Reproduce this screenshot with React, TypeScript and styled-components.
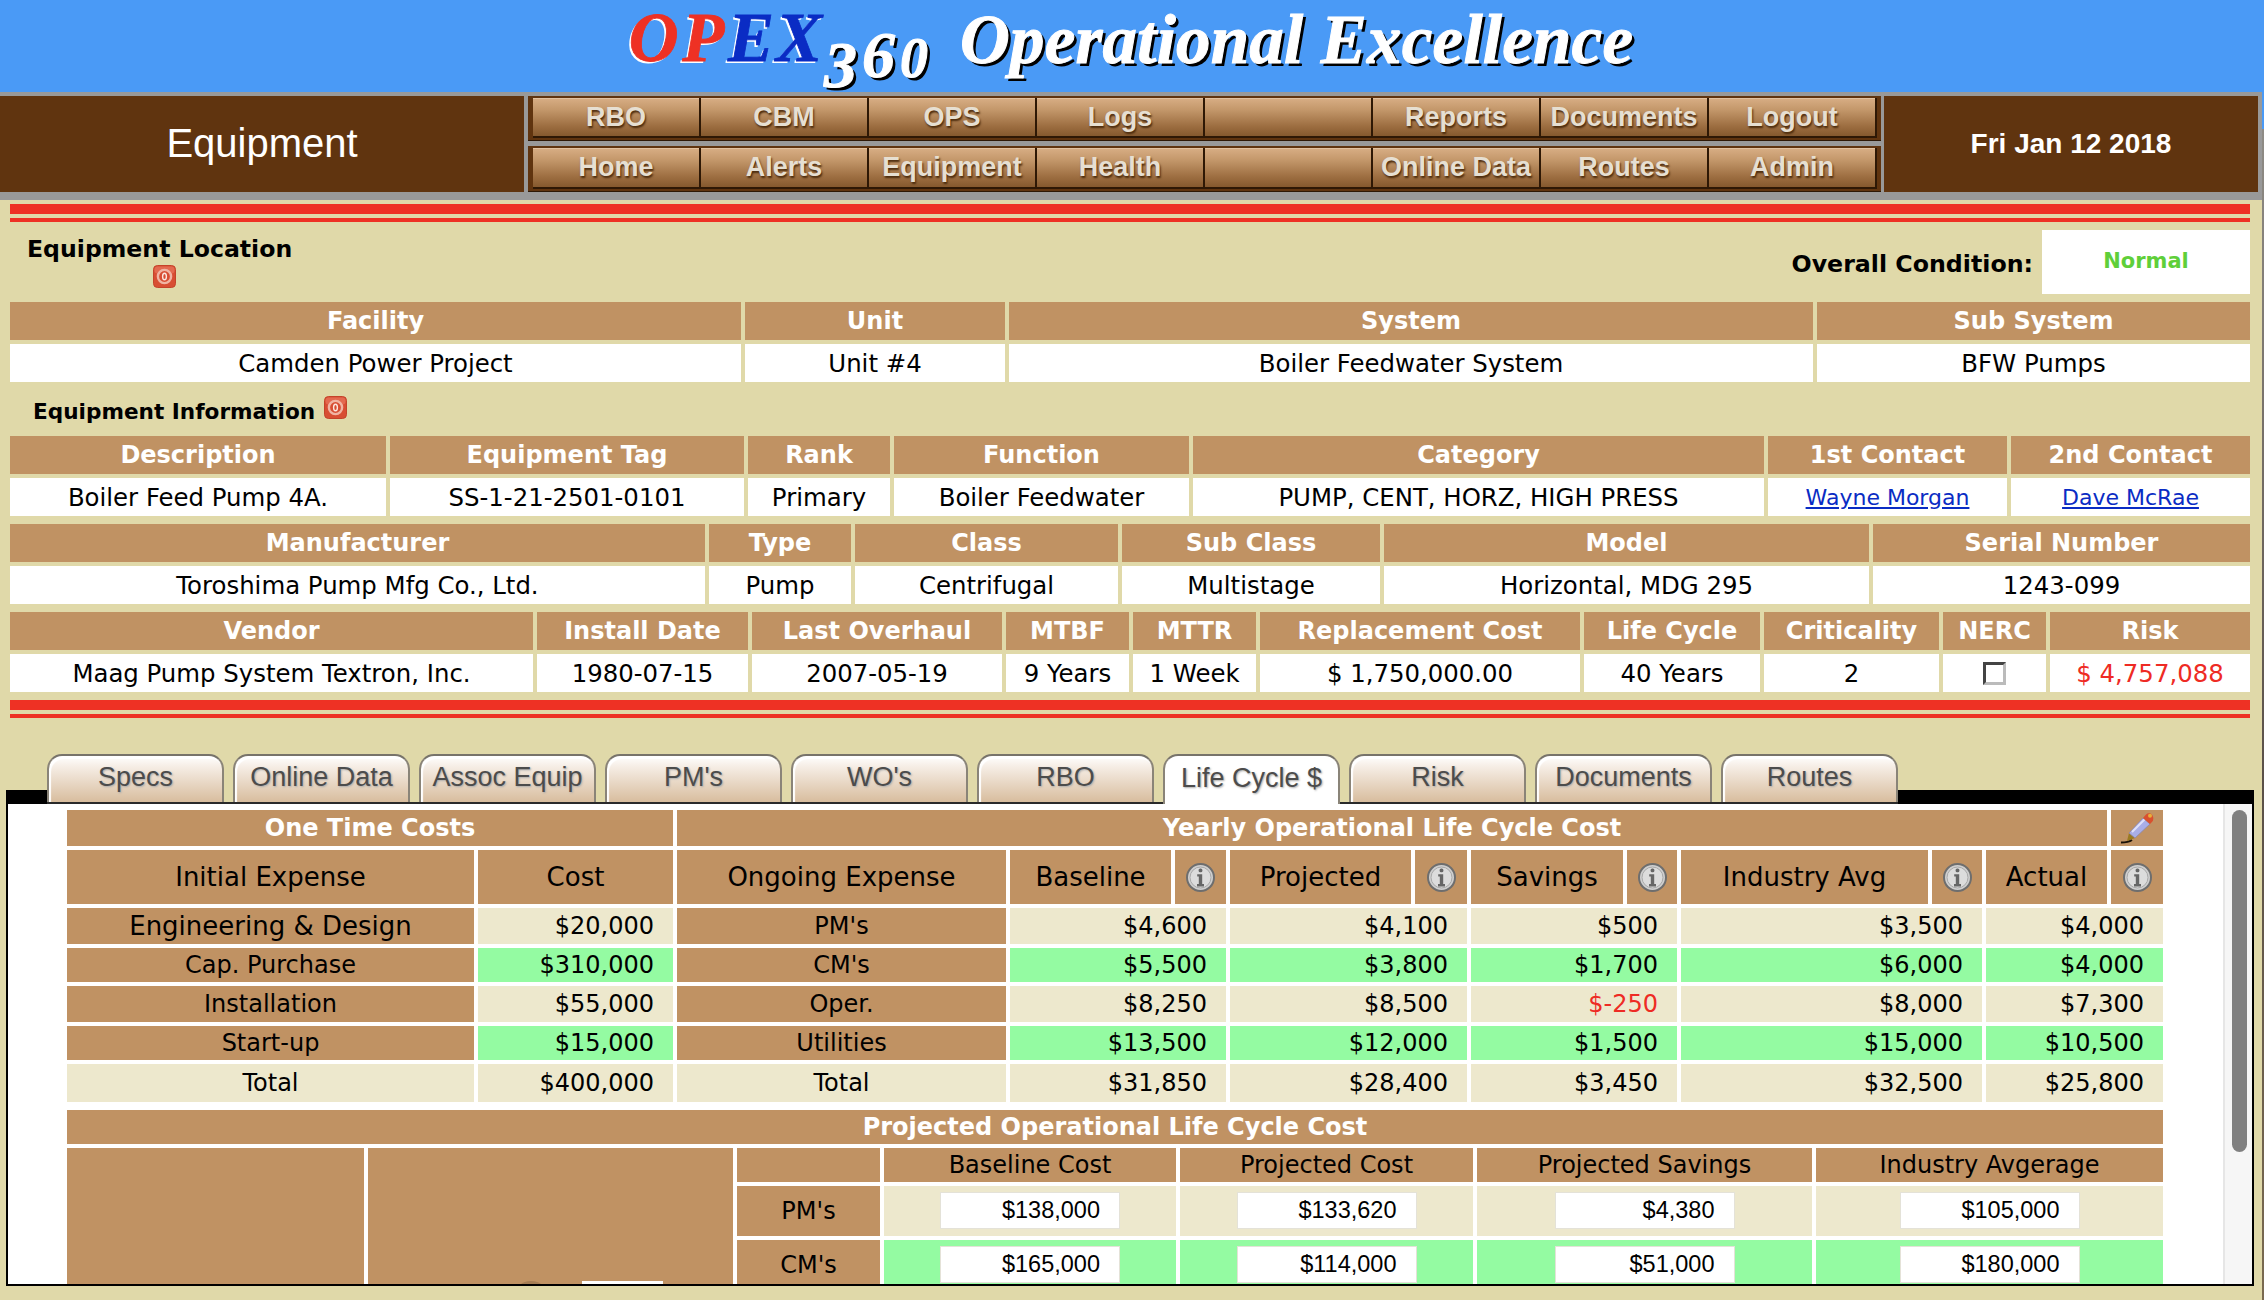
import React from 'react'
import styled, { createGlobalStyle } from 'styled-components'

const GlobalStyle = createGlobalStyle`
	html, body {
		margin: 0;
		padding: 0;
		background: #e0d9a9;
	}
	body {
		font-family: 'DejaVu Sans', Verdana, sans-serif;
		color: #000;
	}
	* {
		box-sizing: border-box;
	}
`

//=> Icons
const PowerIcon = () => (
	<svg width='23' height='23' viewBox='0 0 23 23'>
		<rect x='0.5' y='0.5' width='22' height='22' rx='4' fill='#d84e33' stroke='#c4432a' />
		<rect x='1.5' y='1.5' width='20' height='7' rx='3' fill='#e36a50' />
		<circle cx='11.5' cy='11.5' r='6.6' fill='#d84e33' stroke='#f0b4a3' strokeWidth='2.4' />
		<ellipse cx='11.5' cy='11.5' rx='1.9' ry='3.2' fill='none' stroke='#fbe6df' strokeWidth='1.4' />
	</svg>
)

const InfoIcon = () => (
	<svg width='29' height='29' viewBox='0 0 29 29'>
		<circle cx='14.5' cy='14.5' r='13.5' fill='#cfcfcf' stroke='#6e6e6e' strokeWidth='2' />
		<circle cx='14.5' cy='14.5' r='10.5' fill='#dcdcdc' stroke='#a9a9a9' strokeWidth='1' />
		<rect x='12.6' y='5.5' width='3.8' height='3.8' rx='1.6' fill='#666' />
		<path d='M11.2 11.2 H16.2 V21 H18 V23.4 H11 V21 H12.8 V13.4 H11.2 Z' fill='#666' />
	</svg>
)

const PencilIcon = () => (
	<svg width='34' height='32' viewBox='0 0 34 32'>
		<path d='M1 30.5 C5 30.5 9 30 12 28' fill='none' stroke='#1a1208' strokeWidth='2' />
		<path d='M9 21 L7 29 L15 26 Z' fill='#9a7a22' />
		<path d='M9 21 L23 6 L30 12 L15 26 Z' fill='#a9aee8' stroke='#8b86a8' strokeWidth='0.8' />
		<path d='M12 20 L24.5 7.5' stroke='#dfe1fa' strokeWidth='2' />
		<path d='M23 6 L26 2.4 C28 0.8 31 1 32.5 3.4 C33.8 5.6 33.4 8 32.4 9.4 L30 12 Z' fill='#d9502e' />
		<circle cx='30' cy='3.8' r='2' fill='#e8b03a' />
	</svg>
)

//=> Data
const topTables = [
	{
		cols: '731px 260px 804px 433px',
		head: ['Facility', 'Unit', 'System', 'Sub System'],
		body: ['Camden Power Project', 'Unit #4', 'Boiler Feedwater System', 'BFW Pumps'],
	},
]

const middleTables = [
	{
		cols: '695px 142px 263px 258px 485px 377px',
		head: ['Manufacturer', 'Type', 'Class', 'Sub Class', 'Model', 'Serial Number'],
		body: ['Toroshima Pump Mfg Co., Ltd.', 'Pump', 'Centrifugal', 'Multistage', 'Horizontal, MDG 295', '1243-099'],
	},
]

const navTop = ['RBO', 'CBM', 'OPS', 'Logs', '', 'Reports', 'Documents', 'Logout']
const navBottom = ['Home', 'Alerts', 'Equipment', 'Health', '', 'Online Data', 'Routes', 'Admin']
const tabs = ['Specs', 'Online Data', 'Assoc Equip', "PM's", "WO's", 'RBO', 'Life Cycle $', 'Risk', 'Documents', 'Routes']

const costRows = [
	{ name: 'Engineering & Design', large: true, cost: '$20,000', item: "PM's", vals: ['$4,600', '$4,100', '$500', '$3,500', '$4,000'] },
	{ name: 'Cap. Purchase', cost: '$310,000', item: "CM's", vals: ['$5,500', '$3,800', '$1,700', '$6,000', '$4,000'], green: true },
	{ name: 'Installation', cost: '$55,000', item: 'Oper.', vals: ['$8,250', '$8,500', '$-250', '$8,000', '$7,300'] },
	{ name: 'Start-up', cost: '$15,000', item: 'Utilities', vals: ['$13,500', '$12,000', '$1,500', '$15,000', '$10,500'], green: true },
]

const projectedRows = [
	{ name: "PM's", vals: ['$138,000', '$133,620', '$4,380', '$105,000'] },
	{ name: "CM's", vals: ['$165,000', '$114,000', '$51,000', '$180,000'], green: true },
]

//=> DOM
export default function App() {
	return (
		<Page>
			<GlobalStyle />
			<Banner>
				<Logo>
					<Red>OP</Red>
					<Blue>EX</Blue>
					<Digits>
						<Digit $size={66} $drop={26}>3</Digit>
						<Digit $size={66} $drop={16}>6</Digit>
						<Digit $size={56} $drop={16}>0</Digit>
					</Digits>
				</Logo>
				<Slogan>Operational Excellence</Slogan>
			</Banner>

			<TopBand>
				<PageTitle>Equipment</PageTitle>
				<NavColumn>
					<NavRow>
						{navTop.map((label, i) => (
							<NavButton key={i}>{label}</NavButton>
						))}
					</NavRow>
					<NavRow>
						{navBottom.map((label, i) => (
							<NavButton key={i}>{label}</NavButton>
						))}
					</NavRow>
				</NavColumn>
				<DateBox>Fri Jan 12 2018</DateBox>
			</TopBand>

			<Content>
				<Rule />
				<LocationBar>
					<LocationTitle>
						<span>Equipment Location</span>
						<PowerIcon />
					</LocationTitle>
					<ConditionLabel>Overall Condition:</ConditionLabel>
					<ConditionBox>Normal</ConditionBox>
				</LocationBar>

				{topTables.map(t => (
					<InfoGrid key={t.cols} $cols={t.cols}>
						{t.head.map(h => <HeadCell key={h}>{h}</HeadCell>)}
						{t.body.map(b => <BodyCell key={b}>{b}</BodyCell>)}
					</InfoGrid>
				))}

				<InfoTitle>
					<span>Equipment Information</span>
					<PowerIcon />
				</InfoTitle>

				<Stack>
					<InfoGrid $cols='376px 354px 142px 295px 571px 239px 239px'>
						<HeadCell>Description</HeadCell>
						<HeadCell>Equipment Tag</HeadCell>
						<HeadCell>Rank</HeadCell>
						<HeadCell>Function</HeadCell>
						<HeadCell>Category</HeadCell>
						<HeadCell>1st Contact</HeadCell>
						<HeadCell>2nd Contact</HeadCell>
						<BodyCell>Boiler Feed Pump 4A.</BodyCell>
						<BodyCell>SS-1-21-2501-0101</BodyCell>
						<BodyCell>Primary</BodyCell>
						<BodyCell>Boiler Feedwater</BodyCell>
						<BodyCell>PUMP, CENT, HORZ, HIGH PRESS</BodyCell>
						<BodyCell><Contact href='#'>Wayne Morgan</Contact></BodyCell>
						<BodyCell><Contact href='#'>Dave McRae</Contact></BodyCell>
					</InfoGrid>

					{middleTables.map(t => (
						<InfoGrid key={t.cols} $cols={t.cols}>
							{t.head.map(h => <HeadCell key={h}>{h}</HeadCell>)}
							{t.body.map(b => <BodyCell key={b}>{b}</BodyCell>)}
						</InfoGrid>
					))}

					<InfoGrid $cols='523px 211px 250px 123px 123px 320px 176px 175px 103px 200px'>
						<HeadCell>Vendor</HeadCell>
						<HeadCell>Install Date</HeadCell>
						<HeadCell>Last Overhaul</HeadCell>
						<HeadCell>MTBF</HeadCell>
						<HeadCell>MTTR</HeadCell>
						<HeadCell>Replacement Cost</HeadCell>
						<HeadCell>Life Cycle</HeadCell>
						<HeadCell>Criticality</HeadCell>
						<HeadCell>NERC</HeadCell>
						<HeadCell>Risk</HeadCell>
						<BodyCell>Maag Pump System Textron, Inc.</BodyCell>
						<BodyCell>1980-07-15</BodyCell>
						<BodyCell>2007-05-19</BodyCell>
						<BodyCell>9 Years</BodyCell>
						<BodyCell>1 Week</BodyCell>
						<BodyCell>$ 1,750,000.00</BodyCell>
						<BodyCell>40 Years</BodyCell>
						<BodyCell>2</BodyCell>
						<BodyCell><Checkbox /></BodyCell>
						<BodyCell $red>$ 4,757,088</BodyCell>
					</InfoGrid>
				</Stack>

				<Rule />
			</Content>

			<TabStrip>
				<TabEdge $width={41} />
				<TabList>
					{tabs.map(t => (
						<Tab key={t} $active={t === 'Life Cycle $'}>{t}</Tab>
					))}
				</TabList>
				<TabEdge />
			</TabStrip>

			<Panel>
				<PanelBody>
					<CostGrid>
						<TanTitle $span={2}>One Time Costs</TanTitle>
						<TanTitle $span={10}>Yearly Operational Life Cycle Cost</TanTitle>
						<TanCell><PencilIcon /></TanCell>

						<TanCell $large>Initial Expense</TanCell>
						<TanCell $large>Cost</TanCell>
						<TanCell $large>Ongoing Expense</TanCell>
						<TanCell $large>Baseline</TanCell>
						<TanCell><InfoIcon /></TanCell>
						<TanCell $large>Projected</TanCell>
						<TanCell><InfoIcon /></TanCell>
						<TanCell $large>Savings</TanCell>
						<TanCell><InfoIcon /></TanCell>
						<TanCell $large>Industry Avg</TanCell>
						<TanCell><InfoIcon /></TanCell>
						<TanCell $large>Actual</TanCell>
						<TanCell><InfoIcon /></TanCell>

						{costRows.map(r => (
							<React.Fragment key={r.name}>
								<TanCell $large={r.large}>{r.name}</TanCell>
								<ValueCell $green={r.green}>{r.cost}</ValueCell>
								<TanCell>{r.item}</TanCell>
								{r.vals.map((v, i) => (
									<ValueCell key={i} $span={2} $green={r.green} $red={v.startsWith('$-')}>{v}</ValueCell>
								))}
							</React.Fragment>
						))}

						<PlainCell>Total</PlainCell>
						<ValueCell>$400,000</ValueCell>
						<PlainCell>Total</PlainCell>
						<ValueCell $span={2}>$31,850</ValueCell>
						<ValueCell $span={2}>$28,400</ValueCell>
						<ValueCell $span={2}>$3,450</ValueCell>
						<ValueCell $span={2}>$32,500</ValueCell>
						<ValueCell $span={2}>$25,800</ValueCell>
					</CostGrid>

					<ProjectedGrid>
						<ProjectedTitle>Projected Operational Life Cycle Cost</ProjectedTitle>
						<BlankCell />
						<BlankCell>
							<ChartPeek>
								<ChartDome />
								<ChartBox />
							</ChartPeek>
						</BlankCell>
						<TanCell />
						<TanCell>Baseline Cost</TanCell>
						<TanCell>Projected Cost</TanCell>
						<TanCell>Projected Savings</TanCell>
						<TanCell>Industry Avgerage</TanCell>
						{projectedRows.map(r => (
							<React.Fragment key={r.name}>
								<TanCell>{r.name}</TanCell>
								{r.vals.map(v => (
									<InputCell key={v} $green={r.green}>
										<AmountInput readOnly value={v} />
									</InputCell>
								))}
							</React.Fragment>
						))}
					</ProjectedGrid>
				</PanelBody>
				<ScrollTrack>
					<ScrollThumb />
				</ScrollTrack>
			</Panel>
		</Page>
	)
}

//=> Style
const Page = styled.div`
	width: 2264px;
	height: 1300px;
	overflow: hidden;
	background: #e0d9a9;
	border-right: 2px solid;
	border-image: linear-gradient(#4a9af6 10%, #8f8c86 10%, #5a5048 60%, #7a6a50) 1;
`

const Banner = styled.header`
	height: 92px;
	background: #4a9af6;
	display: flex;
	justify-content: center;
	gap: 27px;
	font-family: 'Liberation Serif', 'Times New Roman', serif;
	font-style: italic;
	font-weight: 700;
	font-size: 69px;
	line-height: 77px;
`

const Logo = styled.div`
	letter-spacing: 3.6px;
	-webkit-text-stroke: 0.8px currentColor;
`

const Red = styled.span`
	color: #ee3124;
	text-shadow: -2px 2px 0 #fff;
`

const Blue = styled.span`
	color: #0a2cc4;
	letter-spacing: 2px;
	text-shadow: -2px 2px 0 #fff;
`

const Digits = styled.span`
	color: #fff;
	text-shadow: 3px 3px 0 #000;
	-webkit-text-stroke: 1px #fff;
`

const Digit = styled.span<{ $size: number; $drop: number }>`
	font-size: ${p => p.$size}px;
	line-height: 0;
	vertical-align: -${p => p.$drop}px;
	letter-spacing: 5px;
`

const Slogan = styled.div`
	margin-top: 2px;
	color: #fff;
	text-shadow: 3px 3px 0 #000;
	-webkit-text-stroke: 1px #fff;
	letter-spacing: 0.2px;
`

const TopBand = styled.div`
	display: grid;
	grid-template-columns: 524px 1352px 374px;
	gap: 4px;
	padding: 4px 4px 8px 0;
	background: #999;
	font-family: 'Liberation Sans', Arial, sans-serif;
`

const PageTitle = styled.div`
	height: 96px;
	padding-bottom: 2px;
	background: #60340f;
	color: #fff;
	font-size: 40px;
	display: flex;
	align-items: center;
	justify-content: center;
`

const DateBox = styled(PageTitle)`
	padding-bottom: 0;
	font-size: 28px;
	font-weight: 700;
`

const NavColumn = styled.nav`
	display: grid;
	grid-template-rows: 45px 46px;
	gap: 5px;
`

const NavRow = styled.div`
	display: grid;
	grid-template-columns: repeat(8, 168px);
	padding: 2px 4px 2px 5px;
	background: #60340f;
	border-bottom: 1px solid #2e1805;
`

const NavButton = styled.div`
	display: flex;
	align-items: center;
	justify-content: center;
	background: linear-gradient(#d8ae85 0%, #c4986b 30%, #9c6d40 75%, #85592e 100%);
	border-right: 2px solid #2e1805;
	border-bottom: 2px solid #2e1805;
	box-shadow: inset 0 1px 0 #e2c19f;
	color: #e6dfd2;
	font-size: 27px;
	font-weight: 700;
	white-space: nowrap;
	text-shadow: 1px 2px 2px #4a2a0c;
`

const Content = styled.main`
	padding: 4px 12px 0 10px;
`

const Rule = styled.div`
	height: 18px;
	border-top: 10px solid #ee3124;
	border-bottom: 4px solid #ee3124;
`

const LocationBar = styled.div`
	height: 80px;
	display: flex;
	align-items: flex-start;
`

const LocationTitle = styled.div`
	display: flex;
	flex-direction: column;
	align-items: flex-start;
	gap: 1px;
	padding: 13px 0 0 17px;
	margin-right: auto;
	font-size: 23.6px;
	line-height: 29px;
	font-weight: 700;
	svg {
		margin-left: 126px;
	}
`

const ConditionLabel = styled.div`
	margin: 28px 9px 0 0;
	font-size: 23.7px;
	line-height: 29px;
	font-weight: 700;
`

const ConditionBox = styled.div`
	width: 208px;
	height: 64px;
	margin-top: 8px;
	padding-bottom: 2px;
	background: #fff;
	color: #5fcf3a;
	font-size: 21px;
	font-weight: 700;
	display: flex;
	align-items: center;
	justify-content: center;
`

const InfoGrid = styled.div<{ $cols: string }>`
	display: grid;
	grid-template-columns: ${p => p.$cols};
	grid-auto-rows: 38px;
	gap: 4px;
`

const Stack = styled.div`
	display: flex;
	flex-direction: column;
	gap: 8px;
	margin-bottom: 8px;
`

const HeadCell = styled.div`
	display: flex;
	align-items: center;
	justify-content: center;
	background: #c09263;
	color: #fff;
	font-size: 24px;
	font-weight: 700;
	white-space: nowrap;
`

const BodyCell = styled.div<{ $red?: boolean }>`
	display: flex;
	align-items: center;
	justify-content: center;
	background: #fff;
	color: ${p => (p.$red ? '#ee2b24' : '#000')};
	font-size: 24.4px;
	white-space: nowrap;
`

const Contact = styled.a`
	color: #0a2cc4;
	font-size: 22px;
	text-decoration: underline;
`

const Checkbox = styled.span`
	width: 23px;
	height: 23px;
	background: #fff;
	border: 3px solid;
	border-color: #444 #bbb #bbb #444;
`

const InfoTitle = styled.div`
	height: 54px;
	padding: 14px 0 0 23px;
	display: flex;
	align-items: flex-start;
	gap: 9px;
	font-size: 21.6px;
	line-height: 31px;
	font-weight: 700;
`

const TabStrip = styled.div`
	height: 50px;
	margin: 36px 8px 0 6px;
	display: flex;
	align-items: flex-end;
`

const TabEdge = styled.div<{ $width?: number }>`
	height: 14px;
	background: #000;
	flex: ${p => (p.$width ? `0 0 ${p.$width}px` : '1')};
`

const TabList = styled.div`
	display: flex;
	gap: 9px;
	background: linear-gradient(transparent 48px, #2a2a2a 48px);
`

const Tab = styled.div<{ $active?: boolean }>`
	width: 177px;
	height: ${p => (p.$active ? 50 : 48)}px;
	margin-bottom: ${p => (p.$active ? 0 : 2)}px;
	display: flex;
	align-items: center;
	justify-content: center;
	padding-bottom: 4px;
	border: 2px solid #8a8478;
	border-bottom: none;
	border-top-color: #77736a;
	border-radius: 15px 15px 0 0;
	background: ${p => (p.$active ? '#fff' : 'linear-gradient(#fff 0%, #f6eee6 22%, #d8bd9e 100%)')};
	box-shadow: ${p => (p.$active ? 'none' : 'inset 2px 3px 1px #fff')};
	color: #4c4c4c;
	font-family: 'Liberation Sans', Arial, sans-serif;
	font-size: 27px;
	white-space: nowrap;
	text-shadow: 1px 1px 2px #aaa;
`

const Panel = styled.section`
	height: 482px;
	margin: 0 8px 0 6px;
	display: grid;
	grid-template-columns: 1fr 29px;
	background: #fff;
	border: 2px solid #000;
	border-top: none;
	overflow: hidden;
`

const PanelBody = styled.div`
	height: 480px;
	padding: 6px 60px 0 59px;
	overflow: hidden;
`

const ScrollTrack = styled.div`
	height: 480px;
	padding: 6px 5px 0 7px;
	background: #f6f6f6;
	border-left: 2px solid #e6e6e6;
`

const ScrollThumb = styled.div`
	height: 342px;
	background: #808080;
	border-radius: 8px;
`

const CostGrid = styled.div`
	display: grid;
	grid-template-columns: 407px 195px 329px 161px 51px 181px 52px 152px 50px 247px 50px 121px 52px;
	grid-template-rows: 36px 54px 36px 34px 36px 34px 38px;
	gap: 4px;
`

const TanCell = styled.div<{ $large?: boolean }>`
	display: flex;
	align-items: center;
	justify-content: center;
	background: #c09263;
	color: #000;
	font-size: ${p => (p.$large ? 26 : 24)}px;
	white-space: nowrap;
`

const TanTitle = styled(TanCell)<{ $span: number }>`
	grid-column: span ${p => p.$span};
	color: #fff;
	font-size: 24px;
	font-weight: 700;
`

const PlainCell = styled(TanCell)`
	background: #ede8cd;
`

const ValueCell = styled.div<{ $span?: number; $green?: boolean; $red?: boolean }>`
	grid-column: span ${p => p.$span || 1};
	display: flex;
	align-items: center;
	justify-content: flex-end;
	padding-right: 19px;
	background: ${p => (p.$green ? '#94fba2' : '#ede8cd')};
	color: ${p => (p.$red ? '#ee2b24' : '#000')};
	font-size: 24px;
`

const ProjectedGrid = styled.div`
	display: grid;
	grid-template-columns: 297px 365px 143px 292px 293px 335px 347px;
	grid-template-rows: 34px 34px 50px 50px;
	gap: 4px;
	margin-top: 8px;
`

const ProjectedTitle = styled(TanCell)`
	grid-column: 1 / -1;
	color: #fff;
	font-weight: 700;
`

const BlankCell = styled.div`
	grid-row: span 3;
	padding-top: 133px;
	background: #c09263;
`

const ChartPeek = styled.div`
	display: flex;
	margin-left: 145px;
	gap: 33px;
`

const ChartDome = styled.div`
	width: 36px;
	height: 20px;
	border-radius: 18px 18px 0 0;
	background: #a57d54;
`

const ChartBox = styled.div`
	width: 81px;
	height: 20px;
	background: #fff;
`

const InputCell = styled.div<{ $green?: boolean }>`
	display: flex;
	align-items: flex-start;
	justify-content: center;
	padding-top: 6px;
	background: ${p => (p.$green ? '#94fba2' : '#ede8cd')};
`

const AmountInput = styled.input`
	width: 180px;
	height: 37px;
	padding: 0 19px 0 0;
	border: 1px solid #e4e2d8;
	background: #fff;
	color: #000;
	font-family: 'Liberation Sans', Arial, sans-serif;
	font-size: 23.5px;
	text-align: right;
	outline: none;
`
